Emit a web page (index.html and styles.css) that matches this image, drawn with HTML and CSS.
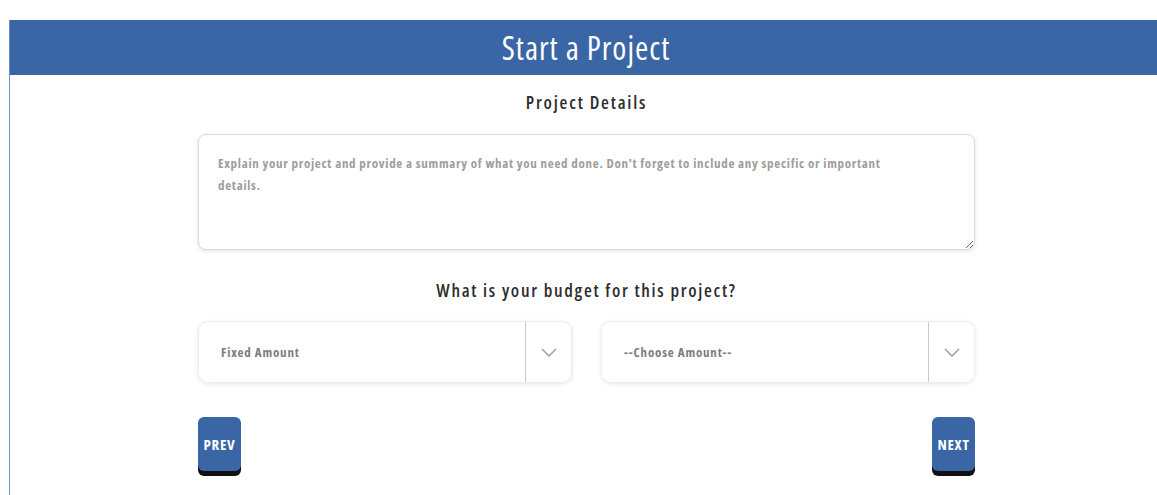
FILE: index.html
```html
<!DOCTYPE html>
<html lang="en">
<head>
  <meta charset="UTF-8">
  <title>Start a Project</title>
  <link rel="stylesheet" href="styles.css">
</head>
<body>

  <div class="wizard">
    <div class="wizard-head">Start a Project</div>

    <form class="step">
      <h3 class="step-title">Project Details</h3>
      <textarea class="details" placeholder="Explain your project and provide a summary of what you need done. Don't forget to include any specific or important details."></textarea>

      <h3 class="step-title budget-title">What is your budget for this project?</h3>
      <div class="selects">
        <div class="select">
          <span class="select-value">Fixed Amount</span>
          <span class="select-arrow">
            <svg width="16" height="9" viewBox="0 0 16 9"><path d="M1 1l7 7 7-7" fill="none" stroke="#a0a0a0" stroke-width="1.5"/></svg>
          </span>
        </div>
        <div class="select">
          <span class="select-value">--Choose Amount--</span>
          <span class="select-arrow">
            <svg width="16" height="9" viewBox="0 0 16 9"><path d="M1 1l7 7 7-7" fill="none" stroke="#a0a0a0" stroke-width="1.5"/></svg>
          </span>
        </div>
      </div>

      <div class="nav">
        <button type="button" class="btn">PREV</button>
        <button type="button" class="btn">NEXT</button>
      </div>
    </form>
  </div>

</body>
</html>
```

FILE: styles.css
```css
html, body {
  margin: 0;
  overflow: hidden;
  background: #fff;
}
body {
  font-family: "Open Sans", "DejaVu Sans Condensed", sans-serif;
  font-stretch: 75%;
}
.wizard {
  margin: 20px 0 0 9px;
  width: 1152px;
  height: 480px;
  border-left: 1px solid #6f8fc4;
}
.wizard-head {
  background: #3a66a5;
  color: #fff;
  height: 55px;
  line-height: 55px;
  text-align: center;
  font-size: 32px;
  letter-spacing: 1px;
}
.step {
  width: 777px;
  margin: 0 auto;
  padding-left: 1px;
}
.step-title {
  margin: 0;
  text-align: center;
  font-size: 18px;
  font-weight: 600;
  letter-spacing: 1.8px;
  color: #2e2e2e;
  padding-top: 15px;
  height: 43px;
  box-sizing: border-box;
}
.details {
  display: block;
  width: 777px;
  height: 116px;
  box-sizing: border-box;
  margin-top: 16px;
  padding: 17px 50px 17px 19px;
  border: 1px solid #d3dede;
  border-radius: 8px;
  box-shadow: 0 1px 4px rgba(0,0,0,0.12);
  font-family: inherit;
  font-stretch: 75%;
  font-size: 13px;
  font-weight: bold;
  letter-spacing: 0.7px;
  line-height: 22px;
  resize: vertical;
}
.details::placeholder {
  color: #9d9d9d;
}
.budget-title {
  margin-top: 28px;
  padding-top: 0;
  height: auto;
  letter-spacing: 1.7px;
}
.selects {
  display: flex;
  gap: 29px;
  margin-top: 19px;
}
.select {
  flex: 1;
  display: flex;
  align-items: center;
  height: 62px;
  box-sizing: border-box;
  border: 1px solid #eceeee;
  border-radius: 10px;
  box-shadow: 0 1px 4px rgba(0,0,0,0.1);
}
.select-value {
  flex: 1;
  padding-left: 22px;
  font-size: 13px;
  font-weight: bold;
  letter-spacing: 0.8px;
  color: #7d7d7d;
}
.select-arrow {
  width: 45px;
  height: 60px;
  display: flex;
  align-items: center;
  justify-content: center;
  border-left: 1px solid #c9c9c9;
}
.nav {
  display: flex;
  justify-content: space-between;
  margin-top: 34px;
}
.btn {
  width: 43px;
  height: 54px;
  padding: 0;
  border: none;
  border-radius: 6px;
  background: #3a66a5;
  color: #fff;
  font-family: inherit;
  font-stretch: 75%;
  font-size: 15px;
  font-weight: bold;
  letter-spacing: 0.7px;
  box-shadow: 0 5px 0 #111;
}
```
